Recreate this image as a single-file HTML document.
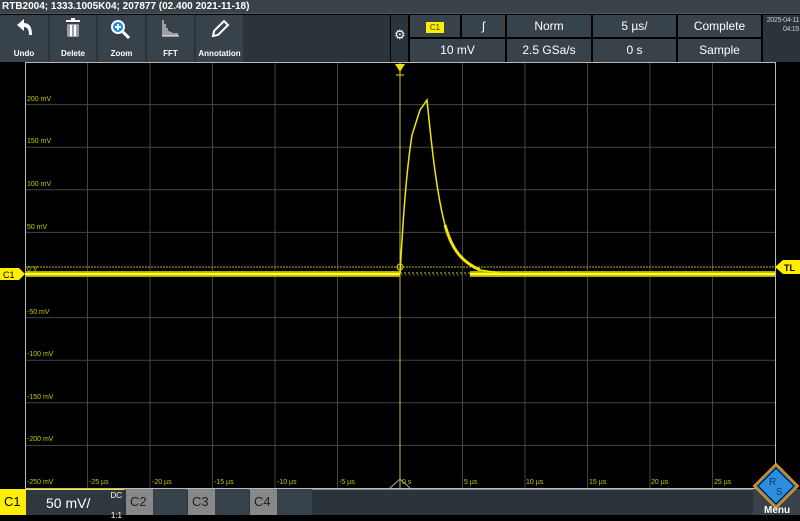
<!DOCTYPE html>
<html><head><meta charset="utf-8"><style>
*{margin:0;padding:0;box-sizing:border-box}
body{width:800px;height:515px;background:#000;position:relative;overflow:hidden;font-family:"Liberation Sans",sans-serif}
.title{position:absolute;left:0;top:0;width:800px;height:14px;background:#3a434a;color:#fff;font-size:10px;font-weight:bold;line-height:14px;padding-left:2px;border-bottom:1px solid #555}
.tb{position:absolute;top:15px;height:47px;background:#2b343a}
.btn{position:absolute;top:15px;height:47px;background:#37424a;color:#fff;font-size:8px;font-weight:bold;text-align:center}
.btn span{position:absolute;bottom:4px;left:0;right:0}
.cell{position:absolute;background:#37424a;color:#fff;font-size:12px;text-align:center;line-height:22px}
.bot{position:absolute;top:489px;height:26px}
</style></head><body>
<div class="title">RTB2004; 1333.1005K04; 207877 (02.400 2021-11-18)</div>
<div class="tb" style="left:0;width:390px"></div>
<div class="btn" style="left:0;width:48px"><svg width="48" height="30" viewBox="0 0 48 30"><path d="M17 10 L24 4 L24 8 Q32 8 32 20 L29 20 Q29 12 24 12 L24 16 Z" fill="#fff"/></svg><span>Undo</span></div>
<div class="btn" style="left:50px;width:46px"><svg width="46" height="30"><rect x="16" y="5" width="14" height="2" fill="#fff"/><rect x="21" y="3" width="4" height="2" fill="#fff"/><path d="M17 9h12v13h-12z M19 10v11 M23 10v11 M27 10v11" fill="#fff" stroke="#37424a" stroke-width="1"/></svg><span>Delete</span></div>
<div class="btn" style="left:98px;width:47px"><svg width="47" height="30"><circle cx="20" cy="12" r="6" fill="#1e88e5" stroke="#fff" stroke-width="2"/><path d="M17 12h6M20 9v6" stroke="#fff" stroke-width="2"/><path d="M25 17l6 6" stroke="#fff" stroke-width="3"/></svg><span>Zoom</span></div>
<div class="btn" style="left:147px;width:47px"><svg width="47" height="30"><path d="M16 5v16M18 9v12M20 13v8M22 16v5M24 17v4M26 18v3M28 18v3M30 18v3" stroke="#fff" stroke-width="1"/><path d="M15 21h17" stroke="#fff"/></svg><span>FFT</span></div>
<div class="btn" style="left:196px;width:47px"><svg width="47" height="30"><path d="M17 21l1-5 10-10 4 4-10 10z" fill="none" stroke="#fff" stroke-width="2"/></svg><span>Annotation</span></div>
<div class="tb" style="left:391px;width:17px;background:#2b343a"><div style="color:#fff;font-size:13px;position:absolute;top:12px;left:3px">⚙</div></div>
<div class="cell" style="left:410px;top:15px;width:50px;height:22px"><span style="background:#ffee00;color:#333;font-size:8px;padding:1px 4px;line-height:12px">C1</span></div>
<div class="cell" style="left:462px;top:15px;width:43px;height:22px">ʃ</div>
<div class="cell" style="left:507px;top:15px;width:84px;height:22px">Norm</div>
<div class="cell" style="left:593px;top:15px;width:83px;height:22px">5 µs/</div>
<div class="cell" style="left:678px;top:15px;width:83px;height:22px">Complete</div>
<div class="cell" style="left:410px;top:39px;width:95px;height:23px">10 mV</div>
<div class="cell" style="left:507px;top:39px;width:84px;height:23px">2.5 GSa/s</div>
<div class="cell" style="left:593px;top:39px;width:83px;height:23px">0 s</div>
<div class="cell" style="left:678px;top:39px;width:83px;height:23px">Sample</div>
<div class="tb" style="left:763px;width:37px;color:#ccc;font-size:7px;letter-spacing:-0.3px;text-align:right;padding:1px 1px;line-height:9px;white-space:nowrap">2025-04-11<br>04:15</div>
<svg style="position:absolute;left:0;top:0" width="800" height="515">
<g stroke="#444" stroke-width="1">
<path d="M87.5 62V488M150 62V488M212.5 62V488M275 62V488M337.5 62V488M462.5 62V488M525 62V488M587.5 62V488M650 62V488M712.5 62V488"/>
<path d="M25 104.6H775M25 147.2H775M25 189.8H775M25 232.4H775M25 317.6H775M25 360.2H775M25 402.8H775M25 445.4H775"/>
</g>
<rect x="25.5" y="62.5" width="750" height="426" fill="none" stroke="#bbb"/>
<path d="M400 62V488" stroke="#c8c030" stroke-width="1"/>
<path d="M25 267H775" stroke="#b8b020" stroke-dasharray="2 1"/>
<path d="M25 275H775" stroke="#555" stroke-dasharray="2 2"/>
<g fill="#c8c800" font-size="7" font-family="Liberation Sans">
<text x="27" y="101">200 mV</text><text x="27" y="143">150 mV</text><text x="27" y="186">100 mV</text><text x="27" y="229">50 mV</text><text x="27" y="271">0 V</text><text x="27" y="314">-50 mV</text><text x="27" y="356">-100 mV</text><text x="27" y="399">-150 mV</text><text x="27" y="441">-200 mV</text><text x="27" y="484">-250 mV</text>
<text x="89" y="484">-25 µs</text><text x="152" y="484">-20 µs</text><text x="214" y="484">-15 µs</text><text x="277" y="484">-10 µs</text><text x="339" y="484">-5 µs</text><text x="402" y="484">0 s</text><text x="464" y="484">5 µs</text><text x="526" y="484">10 µs</text><text x="589" y="484">15 µs</text><text x="651" y="484">20 µs</text><text x="714" y="484">25 µs</text>
</g>
<rect x="25" y="271" width="375" height="6" fill="#b0a800"/>
<rect x="470" y="271" width="305" height="6" fill="#b0a800"/>
<path d="M25 274H400M470 274H775" stroke="#ffff20" stroke-width="2.5"/>
<path d="M400 273H470" stroke="#d0c800" stroke-width="1" stroke-dasharray="2 2"/>
<path d="M400 274 C402 240 405 180 412 135 L420 110 L427 100 C432 150 437 195 445 225 C452 250 462 262 480 270 L500 273" fill="none" stroke="#f0e800" stroke-width="1.5"/>
<path d="M445 225 C452 250 462 262 480 270" fill="none" stroke="#f0e800" stroke-width="3"/>
<circle cx="400" cy="267" r="3" fill="none" stroke="#e8e000"/>
<path d="M395 64h10l-5 8z" fill="#e8e000"/><path d="M396 75h8M400 72v6" stroke="#e8e000"/>
<path d="M0 268h19l6 6-6 6H0z" fill="#ffee00"/><text x="3" y="278" font-size="9" fill="#000">C1</text>
<path d="M775 267l8-7h17v14h-17z" fill="#ffee00"/><text x="784" y="271" font-size="9" font-weight="bold" fill="#000">TL</text>
<path d="M390 488l10-9 10 9" fill="none" stroke="#aaa"/>
</svg>
<div class="bot" style="left:0;width:800px;background:#2b343a;border-top:1px solid #888"></div>
<div class="bot" style="left:0;width:26px;background:#ffee00;font-size:13px;line-height:26px;padding-left:4px">C1</div>
<div class="bot" style="left:26px;width:98px;background:#2f383e;border-top:1px solid #ffee00;color:#fff;font-size:14px;line-height:26px;padding-left:20px">50 mV/<span style="position:absolute;right:2px;top:1px;font-size:8px;line-height:10px;text-align:right">DC<br><br>1:1</span></div>
<div class="bot" style="left:126px;width:27px;background:#888;font-size:13px;line-height:26px;padding-left:4px;color:#222">C2</div>
<div class="bot" style="left:153px;width:34px;background:#37424a"></div>
<div class="bot" style="left:188px;width:27px;background:#888;font-size:13px;line-height:26px;padding-left:4px;color:#222">C3</div>
<div class="bot" style="left:215px;width:34px;background:#37424a"></div>
<div class="bot" style="left:250px;width:27px;background:#888;font-size:13px;line-height:26px;padding-left:4px;color:#222">C4</div>
<div class="bot" style="left:277px;width:35px;background:#37424a"></div>
<div class="bot" style="left:753px;width:47px;background:#37424a"></div>
<svg style="position:absolute;left:752px;top:462px" width="48" height="53"><path d="M24 2l22 22-22 22-22-22z" fill="#2a8fe0" stroke="#f08c00" stroke-width="2"/><path d="M24 6l18 18-18 18-18-18z" fill="none" stroke="#000" stroke-width="1"/><text x="17" y="23" font-size="10" fill="#234">R</text><text x="24" y="33" font-size="10" fill="#234">S</text><text x="12" y="51" font-size="10" font-weight="bold" fill="#fff">Menu</text></svg>
</body></html>
